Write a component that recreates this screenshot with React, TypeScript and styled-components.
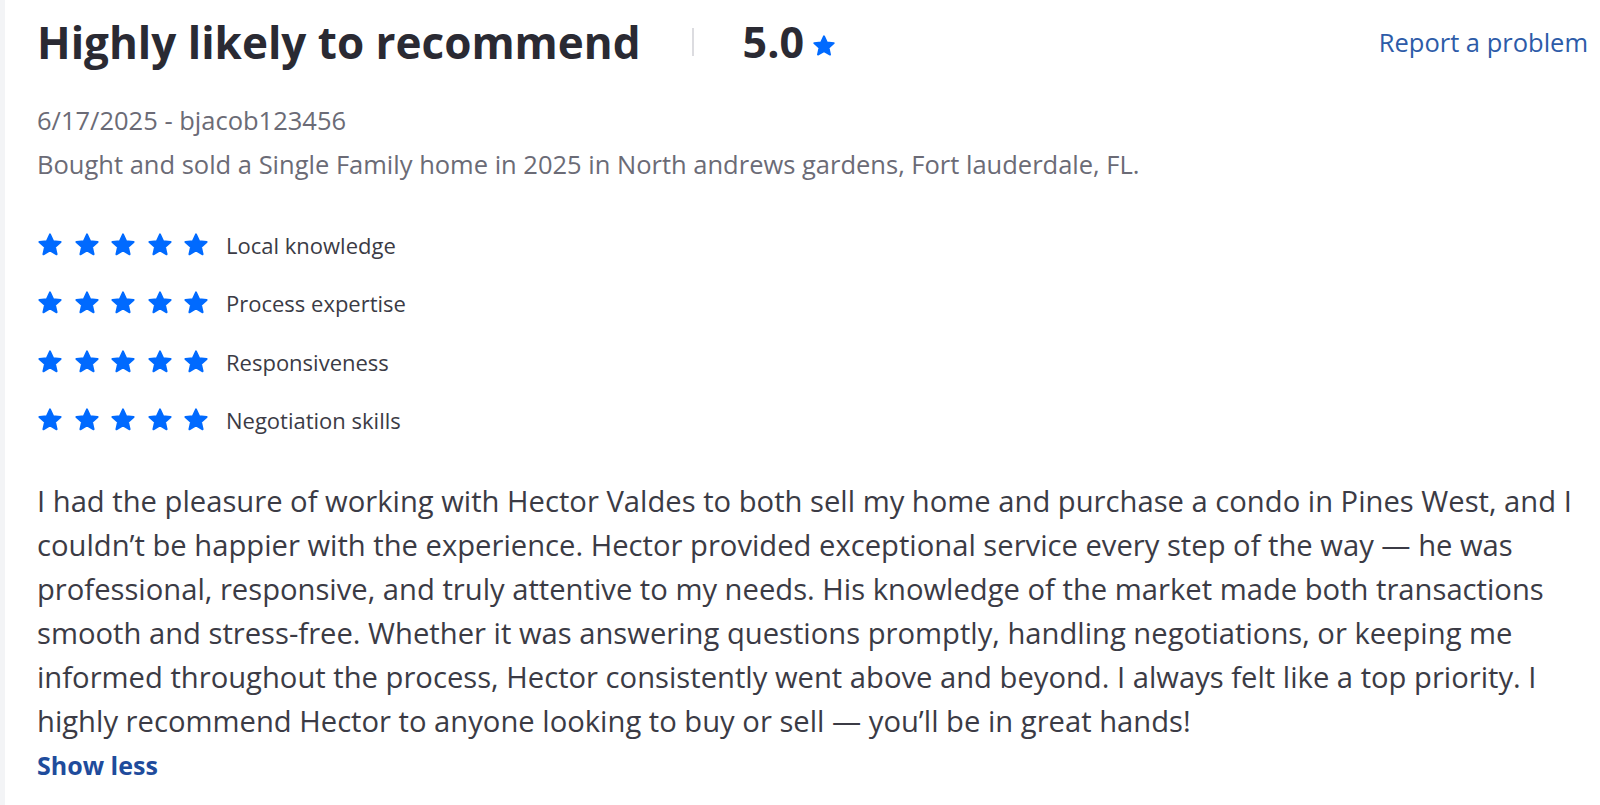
import React from 'react';
import styled, { createGlobalStyle } from 'styled-components';

const GlobalStyle = createGlobalStyle`
  html, body {
    margin: 0;
    padding: 0;
    background: #ffffff;
    font-family: 'Open Sans', 'Noto Sans', sans-serif;
  }
`;

const Page = styled.div`
  display: flex;
  min-height: 805px;
  background: #fff;
`;

const Rail = styled.div`
  width: 5px;
  flex-shrink: 0;
  background: #f3f4f6;
`;

const Card = styled.section`
  flex: 1;
  padding: 16px 12px 0 32px;
  display: flex;
  flex-direction: column;
`;

const Header = styled.div`
  display: flex;
  align-items: center;
  height: 52px;
`;

const Title = styled.h2`
  margin: 0;
  color: #2a2a33;
  font-size: 44px;
  font-weight: 700;
  line-height: 52px;
`;

const Divider = styled.span`
  width: 2px;
  height: 28px;
  background: #dcdce0;
  margin: 0 49px 0 51px;
`;

const Score = styled.span`
  display: flex;
  align-items: baseline;
  gap: 8px;
  color: #2a2a33;
  font-size: 43px;
  font-weight: 700;
  line-height: 52px;
`;

const ReportLink = styled.a`
  margin-left: auto;
  color: #2d5ba8;
  font-size: 25.5px;
  text-decoration: none;
  cursor: pointer;
`;

const MetaBlock = styled.div`
  margin-top: 30px;
`;

const Meta = styled.p`
  margin: 0;
  color: #6b6b76;
  font-size: 25.5px;
  line-height: 44px;
`;

const Ratings = styled.ul`
  list-style: none;
  margin: 38px 0 0;
  padding: 0;
  display: flex;
  flex-direction: column;
  gap: 16.3px;
`;

const RatingRow = styled.li`
  display: flex;
  align-items: center;
  height: 42px;
`;

const Stars = styled.span`
  display: flex;
  gap: 10.5px;
  margin-right: 17px;
`;

const Label = styled.span`
  color: #3b3b45;
  font-size: 22px;
`;

const Body = styled.p`
  margin: 38px 0 0;
  color: #3b3b45;
  font-size: 29.2px;
  line-height: 44px;
`;

const ShowLess = styled.button`
  align-self: flex-start;
  border: none;
  background: none;
  padding: 0;
  margin: 0;
  color: #1f4c9c;
  font-family: inherit;
  font-size: 25px;
  font-weight: 700;
  line-height: 44px;
  cursor: pointer;
`;

const Star = ({ size }: { size: number }) => (
  <svg width={size} height={size} viewBox="0 0 24 24" aria-hidden>
    <path
      d="M12 2.2l2.9 6.3 6.9.7-5.2 4.6 1.5 6.8L12 17.1l-6.1 3.5 1.5-6.8-5.2-4.6 6.9-.7z"
      fill="#006aff"
      stroke="#006aff"
      strokeWidth="1.8"
      strokeLinejoin="round"
    />
  </svg>
);

const categories = [
  'Local knowledge',
  'Process expertise',
  'Responsiveness',
  'Negotiation skills',
];

export default function App() {
  return (
    <Page>
      <GlobalStyle />
      <Rail />
      <Card>
        <Header>
          <Title>Highly likely to recommend</Title>
          <Divider />
          <Score>
            5.0
            <Star size={24} />
          </Score>
          <ReportLink>Report a problem</ReportLink>
        </Header>
        <MetaBlock>
          <Meta>6/17/2025 - bjacob123456</Meta>
          <Meta>
            Bought and sold a Single Family home in 2025 in North andrews gardens, Fort
            lauderdale, FL.
          </Meta>
        </MetaBlock>
        <Ratings>
          {categories.map((c) => (
            <RatingRow key={c}>
              <Stars>
                {[0, 1, 2, 3, 4].map((i) => (
                  <Star key={i} size={26} />
                ))}
              </Stars>
              <Label>{c}</Label>
            </RatingRow>
          ))}
        </Ratings>
        <Body>
          I had the pleasure of working with Hector Valdes to both sell my home and purchase a
          condo in Pines West, and I couldn’t be happier with the experience. Hector provided
          exceptional service every step of the way — he was professional, responsive, and
          truly attentive to my needs. His knowledge of the market made both transactions
          smooth and stress-free. Whether it was answering questions promptly, handling
          negotiations, or keeping me informed throughout the process, Hector consistently went
          above and beyond. I always felt like a top priority. I highly recommend Hector to
          anyone looking to buy or sell — you’ll be in great hands!
        </Body>
        <ShowLess>Show less</ShowLess>
      </Card>
    </Page>
  );
}
